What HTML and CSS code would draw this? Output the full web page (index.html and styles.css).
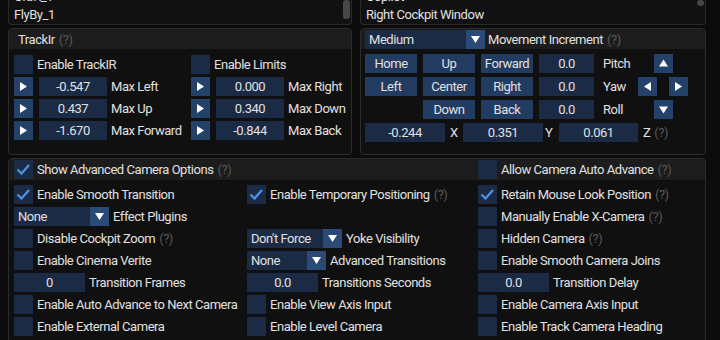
FILE: index.html
```html
<!DOCTYPE html>
<html lang="en">
<head>
    <meta charset="UTF-8">
    <title>Camera Settings</title>
    <link rel="stylesheet" href="styles.css">
</head>
<body>
<div class="window">

    <div class="top-row">
        <div class="list">
            <div class="item">OrbR_1</div>
            <div class="item">FlyBy_1</div>
            <div class="thumb"></div>
        </div>
        <div class="list">
            <div class="item">Copilot</div>
            <div class="item">Right Cockpit Window</div>
            <div class="thumb short"></div>
        </div>
    </div>

    <div class="top-row panels">
        <!-- TrackIr -->
        <div class="panel">
            <div class="panel-header">TrackIr <span class="help">(?)</span></div>
            <div class="trackir-body">
                <div class="tir-row first">
                    <div class="cell"><span class="check"></span>Enable TrackIR</div>
                    <div class="cell"><span class="check"></span>Enable Limits</div>
                </div>
                <div class="tir-row">
                    <div class="cell"><span class="arrow-btn"><svg viewBox="0 0 19 19"><path d="M6 5 L13 9.5 L6 14 Z"/></svg></span><span class="field tir">-0.547</span>Max Left</div>
                    <div class="cell"><span class="arrow-btn"><svg viewBox="0 0 19 19"><path d="M6 5 L13 9.5 L6 14 Z"/></svg></span><span class="field tir">0.000</span>Max Right</div>
                </div>
                <div class="tir-row">
                    <div class="cell"><span class="arrow-btn"><svg viewBox="0 0 19 19"><path d="M6 5 L13 9.5 L6 14 Z"/></svg></span><span class="field tir">0.437</span>Max Up</div>
                    <div class="cell"><span class="arrow-btn"><svg viewBox="0 0 19 19"><path d="M6 5 L13 9.5 L6 14 Z"/></svg></span><span class="field tir">0.340</span>Max Down</div>
                </div>
                <div class="tir-row">
                    <div class="cell"><span class="arrow-btn"><svg viewBox="0 0 19 19"><path d="M6 5 L13 9.5 L6 14 Z"/></svg></span><span class="field tir">-1.670</span>Max Forward</div>
                    <div class="cell"><span class="arrow-btn"><svg viewBox="0 0 19 19"><path d="M6 5 L13 9.5 L6 14 Z"/></svg></span><span class="field tir">-0.844</span>Max Back</div>
                </div>
            </div>
        </div>

        <!-- Movement -->
        <div class="panel">
            <div class="panel-header move-header">
                <span class="combo wide"><span class="combo-text">Medium</span><span class="combo-arrow"><svg viewBox="0 0 19 19"><path d="M5 6 H14 L9.5 13 Z"/></svg></span></span>
                Movement Increment <span class="help">(?)</span>
            </div>
            <div class="move-body">
                <div class="move-row">
                    <span class="btn">Home</span>
                    <span class="btn">Up</span>
                    <span class="btn">Forward</span>
                    <span class="field small">0.0</span>
                    <span class="move-label">Pitch</span>
                    <span class="arrows center"><span class="arrow-btn"><svg viewBox="0 0 19 19"><path d="M5 12.5 L9.5 5.5 L14 12.5 Z"/></svg></span></span>
                </div>
                <div class="move-row">
                    <span class="btn">Left</span>
                    <span class="btn">Center</span>
                    <span class="btn">Right</span>
                    <span class="field small">0.0</span>
                    <span class="move-label">Yaw</span>
                    <span class="arrows"><span class="arrow-btn"><svg viewBox="0 0 19 19"><path d="M13 5 L6 9.5 L13 14 Z"/></svg></span><span class="arrow-btn"><svg viewBox="0 0 19 19"><path d="M6 5 L13 9.5 L6 14 Z"/></svg></span></span>
                </div>
                <div class="move-row">
                    <span class="spacer"></span>
                    <span class="btn">Down</span>
                    <span class="btn">Back</span>
                    <span class="field small">0.0</span>
                    <span class="move-label">Roll</span>
                    <span class="arrows center"><span class="arrow-btn"><svg viewBox="0 0 19 19"><path d="M5 6.5 L14 6.5 L9.5 13.5 Z"/></svg></span></span>
                </div>
                <div class="move-row axis">
                    <span class="field pos">-0.244</span>
                    <span class="axis-x">X</span>
                    <span class="field pos">0.351</span>
                    <span class="axis-y">Y</span>
                    <span class="field pos last">0.061</span>
                    <span class="axis-z">Z</span>
                    <span class="help">(?)</span>
                </div>
            </div>
        </div>
    </div>

    <!-- Advanced -->
    <div class="panel advanced">
        <div class="adv-grid adv-header">
            <div class="cell"><span class="check on"><svg viewBox="0 0 19 19"><path d="M3.5 9.5 L7.5 13.5 L15 5"/></svg></span>Show Advanced Camera Options <span class="help">(?)</span></div>
            <div class="cell"></div>
            <div class="cell"><span class="check"></span>Allow Camera Auto Advance <span class="help">(?)</span></div>
        </div>
        <div class="adv-grid adv-body">
            <div class="cell"><span class="check on"><svg viewBox="0 0 19 19"><path d="M3.5 9.5 L7.5 13.5 L15 5"/></svg></span>Enable Smooth Transition</div>
            <div class="cell"><span class="check on"><svg viewBox="0 0 19 19"><path d="M3.5 9.5 L7.5 13.5 L15 5"/></svg></span>Enable Temporary Positioning <span class="help">(?)</span></div>
            <div class="cell"><span class="check on"><svg viewBox="0 0 19 19"><path d="M3.5 9.5 L7.5 13.5 L15 5"/></svg></span>Retain Mouse Look Position <span class="help">(?)</span></div>

            <div class="cell"><span class="combo"><span class="combo-text">None</span><span class="combo-arrow"><svg viewBox="0 0 19 19"><path d="M5 6 H14 L9.5 13 Z"/></svg></span></span>Effect Plugins</div>
            <div class="cell"></div>
            <div class="cell"><span class="check"></span>Manually Enable X-Camera <span class="help">(?)</span></div>

            <div class="cell"><span class="check"></span>Disable Cockpit Zoom <span class="help">(?)</span></div>
            <div class="cell"><span class="combo"><span class="combo-text">Don't Force</span><span class="combo-arrow"><svg viewBox="0 0 19 19"><path d="M5 6 H14 L9.5 13 Z"/></svg></span></span>Yoke Visibility</div>
            <div class="cell"><span class="check"></span>Hidden Camera <span class="help">(?)</span></div>

            <div class="cell"><span class="check"></span>Enable Cinema Verite</div>
            <div class="cell"><span class="combo narrow"><span class="combo-text">None</span><span class="combo-arrow"><svg viewBox="0 0 19 19"><path d="M5 6 H14 L9.5 13 Z"/></svg></span></span>Advanced Transitions</div>
            <div class="cell"><span class="check"></span>Enable Smooth Camera Joins</div>

            <div class="cell"><span class="field num">0</span>Transition Frames</div>
            <div class="cell"><span class="field num">0.0</span>Transitions Seconds</div>
            <div class="cell"><span class="field num">0.0</span>Transition Delay</div>

            <div class="cell"><span class="check"></span>Enable Auto Advance to Next Camera</div>
            <div class="cell"><span class="check"></span>Enable View Axis Input</div>
            <div class="cell"><span class="check"></span>Enable Camera Axis Input</div>

            <div class="cell"><span class="check"></span>Enable External Camera</div>
            <div class="cell"><span class="check"></span>Enable Level Camera</div>
            <div class="cell"><span class="check"></span>Enable Track Camera Heading</div>
        </div>
    </div>

</div>
</body>
</html>
```

FILE: styles.css
```css
* {
    box-sizing: border-box;
}

body {
    margin: 0;
    background-color: #0c0c0c;
    font-family: Roboto, "Liberation Sans", sans-serif;
    font-size: 13px;
    letter-spacing: -0.45px;
    color: #e0e0e0;
}

.window {
    width: 698px;
    height: 340px;
    margin-left: 8px;
    overflow: hidden;
}

.top-row {
    display: grid;
    grid-template-columns: 344px 346px;
    column-gap: 8px;
}

/* list boxes, scrolled to the bottom */
.list {
    position: relative;
    height: 25px;
    border: 1px solid #2a2a2a;
    border-top: none;
    border-radius: 0 0 4px 4px;
    background-color: #111111;
    display: flex;
    flex-direction: column;
    justify-content: flex-end;
    overflow: hidden;
    padding: 0 5px;
}

.list .item {
    line-height: 18px;
    white-space: nowrap;
}

.list .thumb {
    position: absolute;
    top: 0;
    right: 1px;
    width: 7px;
    height: 19px;
    border-radius: 3px;
    background-color: #474747;
}

.list .thumb.short {
    height: 6px;
}

.panels {
    margin-top: 3px;
    height: 127px;
}

.panel {
    border: 1px solid #2c2c2c;
    border-radius: 4px;
    background-color: #101010;
    overflow: hidden;
}

.panel-header {
    height: 20px;
    display: flex;
    align-items: center;
    gap: 4px;
    padding-left: 9px;
    background-color: #1c1c1c;
}

.help {
    color: #595959;
}

.cell {
    display: flex;
    align-items: center;
    gap: 4px;
    white-space: nowrap;
}

.check {
    flex: 0 0 19px;
    width: 19px;
    height: 19px;
    background-color: #1b2b45;
}

.check svg {
    display: block;
    width: 19px;
    height: 19px;
}

.check svg path {
    fill: none;
    stroke: #4b8fe2;
    stroke-width: 2.4;
}

.field {
    height: 19px;
    line-height: 19px;
    text-align: center;
    background-color: #1b2b45;
}

.arrow-btn {
    flex: 0 0 19px;
    width: 19px;
    height: 19px;
    background-color: #24416a;
}

.arrow-btn svg {
    display: block;
    width: 19px;
    height: 19px;
    fill: #ffffff;
}

.combo {
    display: flex;
    width: 95px;
    height: 19px;
    background-color: #1b2b45;
}

.combo.narrow {
    width: 79px;
}

.combo.wide {
    width: 120px;
}

.combo-text {
    flex: 1;
    padding-left: 4px;
    line-height: 19px;
}

.combo-arrow {
    width: 19px;
    height: 19px;
    background-color: #2a4a78;
}

.combo-arrow svg {
    display: block;
    width: 19px;
    height: 19px;
    fill: #ffffff;
}

/* TrackIr */
.trackir-body {
    padding: 5px 5px 0;
    display: flex;
    flex-direction: column;
    gap: 3px;
}

.tir-row {
    display: grid;
    grid-template-columns: 177px 1fr;
    height: 19px;
}

.tir-row.first {
    height: 20px;
}

.field.tir {
    width: 68px;
    margin-left: 2px;
}

/* Movement */
.move-header {
    padding-left: 4px;
    gap: 3px;
}

.move-header .help {
    margin-left: 1px;
}

.move-body {
    padding: 5px 4px 0;
    display: flex;
    flex-direction: column;
    gap: 4px;
}

.move-row {
    display: flex;
    align-items: center;
    height: 19px;
    gap: 6px;
}

.btn,
.spacer {
    width: 52px;
    height: 19px;
    line-height: 19px;
    text-align: center;
    background-color: #223b60;
}

.spacer {
    background-color: transparent;
}

.field.small {
    width: 55px;
}

.move-label {
    width: 39px;
    margin-left: -1px;
    padding-left: 4px;
}

.arrows {
    display: flex;
    justify-content: space-between;
    width: 50px;
    margin-left: -6px;
}

.arrows.center {
    justify-content: center;
}

.move-row.axis {
    gap: 0;
}

.field.pos {
    width: 80px;
}

.field.pos.last {
    width: 79px;
}

.axis-x {
    width: 18px;
    padding-left: 5px;
}

.axis-y {
    width: 16px;
    padding-left: 2px;
}

.axis-z {
    padding-left: 5px;
    margin-right: 4px;
}

/* Advanced */
.advanced {
    margin-top: 3px;
    height: 200px;
}

.adv-grid {
    display: grid;
    grid-template-columns: 233px 231px 1fr;
    padding-left: 5px;
}

.adv-header {
    height: 21px;
    align-items: center;
    background-color: #1c1c1c;
}

.adv-body {
    padding-top: 5px;
    grid-auto-rows: 19px;
    row-gap: 3px;
}

.field.num {
    width: 71px;
}
```
